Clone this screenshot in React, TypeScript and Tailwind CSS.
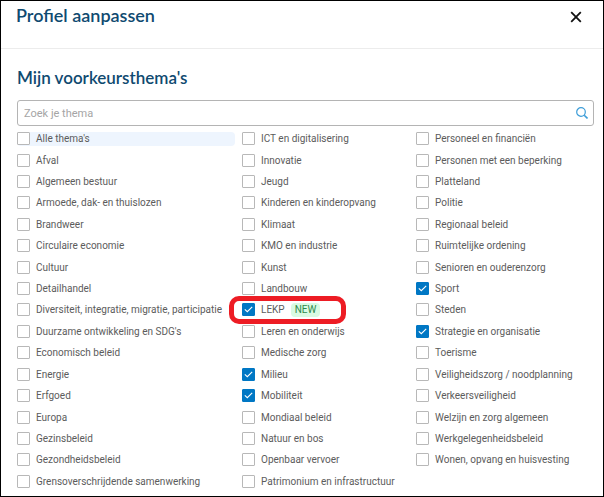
import React, { useState } from "react";

// One list per column
const columns: string[][] = [
    [
        "Alle thema's",
        "Afval",
        "Algemeen bestuur",
        "Armoede, dak- en thuislozen",
        "Brandweer",
        "Circulaire economie",
        "Cultuur",
        "Detailhandel",
        "Diversiteit, integratie, migratie, participatie",
        "Duurzame ontwikkeling en SDG's",
        "Economisch beleid",
        "Energie",
        "Erfgoed",
        "Europa",
        "Gezinsbeleid",
        "Gezondheidsbeleid",
        "Grensoverschrijdende samenwerking",
    ],
    [
        "ICT en digitalisering",
        "Innovatie",
        "Jeugd",
        "Kinderen en kinderopvang",
        "Klimaat",
        "KMO en industrie",
        "Kunst",
        "Landbouw",
        "LEKP",
        "Leren en onderwijs",
        "Medische zorg",
        "Milieu",
        "Mobiliteit",
        "Mondiaal beleid",
        "Natuur en bos",
        "Openbaar vervoer",
        "Patrimonium en infrastructuur",
    ],
    [
        "Personeel en financiën",
        "Personen met een beperking",
        "Platteland",
        "Politie",
        "Regionaal beleid",
        "Ruimtelijke ordening",
        "Senioren en ouderenzorg",
        "Sport",
        "Steden",
        "Strategie en organisatie",
        "Toerisme",
        "Veiligheidszorg / noodplanning",
        "Verkeersveiligheid",
        "Welzijn en zorg algemeen",
        "Werkgelegenheidsbeleid",
        "Wonen, opvang en huisvesting",
    ],
];

type ThemeProps = {
    name: string;
    checked: boolean;
    onToggle: () => void;
};

const Theme = ({ name, checked, onToggle }: ThemeProps) => {
    const isNew = name === "LEKP";

    return (
        <div className="flex items-center">
            <label
                className={`relative flex h-[14px] items-center whitespace-nowrap ${
                    name === "Alle thema's" ? "mr-[7px] grow rounded-sm bg-[#eef5fe]" : ""
                }`}
            >
                <span className="relative mr-[6px] flex size-[13px] shrink-0">
                    <input
                        type="checkbox"
                        checked={checked}
                        onChange={onToggle}
                        className="size-full appearance-none rounded-[1px] border border-[#b8b8b8] bg-white checked:border-[#0077c4] checked:bg-[#0077c4]"
                    />
                    {checked && (
                        <svg viewBox="0 0 13 13" className="pointer-events-none absolute inset-0" fill="none" stroke="#fff" strokeWidth="1.1">
                            <path d="M2.8 6.4 5.3 8.7 10.2 3.9" />
                        </svg>
                    )}
                </span>
                {name}
                {isNew && (
                    <span className="ml-[6px] rounded bg-[#d9fbe3] px-1 leading-[14px] text-[#2f8a4c]">NEW</span>
                )}
                {isNew && (
                    <span className="pointer-events-none absolute -top-[7px] -right-[26px] -bottom-[7px] -left-[13px] rounded-[10px] border-[5px] border-[#ed1c24]" />
                )}
            </label>
        </div>
    );
};

const App = () => {
    const [selected, setSelected] = useState<string[]>(["LEKP", "Milieu", "Mobiliteit", "Sport", "Strategie en organisatie"]);
    const [query, setQuery] = useState("");

    const toggle = (name: string) => {
        setSelected((prev) => (prev.includes(name) ? prev.filter((n) => n !== name) : [...prev, name]));
    };

    const matches = (name: string) => name.toLowerCase().includes(query.toLowerCase());

    return (
        <main className="flex min-h-screen flex-col border border-black bg-white font-[Roboto,sans-serif] text-[10px] text-[#5c5c5c]">
            <header className="flex h-12 items-start justify-between border-b border-[#ececec] pr-5 pl-[15px]">
                <h1 className="pt-[2px] font-[Lato,sans-serif] text-[18px] leading-6 font-semibold text-[#0f4a70]">Profiel aanpassen</h1>
                <button type="button" aria-label="Sluiten" className="mt-[9px] p-[1px]">
                    <svg viewBox="0 0 12 12" className="size-3" fill="none" stroke="#111" strokeWidth="1.8">
                        <path d="M1.2 1.2l9.6 9.6M10.8 1.2 1.2 10.8" />
                    </svg>
                </button>
            </header>

            <section className="flex grow flex-col pr-[9px] pb-[4px] pl-4">
                <h2 className="pt-[17px] font-[Lato,sans-serif] text-[17px] leading-6 font-semibold text-[#0f4a70]">Mijn voorkeursthema's</h2>

                <div className="relative mt-[10px] flex">
                    <input
                        type="text"
                        aria-label="Zoek je thema"
                        placeholder="Zoek je thema"
                        value={query}
                        onChange={(e) => setQuery(e.target.value)}
                        className="h-[26px] w-full rounded-[3px] border border-[#b4b4b4] pr-7 pl-[6px] text-[11px] outline-none placeholder:text-[#a5a5a5]"
                    />
                    <svg viewBox="0 0 12 12" className="absolute top-[7px] right-[6px] size-3" fill="none" stroke="#3d9dd8">
                        <circle cx="5" cy="5" r="4.3" strokeWidth="1.2" />
                        <path d="M8.2 8.2l3.3 3.3" strokeWidth="1.6" />
                    </svg>
                </div>

                <div className="mt-[2px] grid grow grid-cols-[225fr_174fr_178fr]">
                    {columns.map((names, index) => (
                        <div key={index} className="grid grid-rows-[repeat(17,1fr)]">
                            {names.filter(matches).map((name) => (
                                <Theme key={name} name={name} checked={selected.includes(name)} onToggle={() => toggle(name)} />
                            ))}
                        </div>
                    ))}
                </div>
            </section>
        </main>
    );
};

export default App;
